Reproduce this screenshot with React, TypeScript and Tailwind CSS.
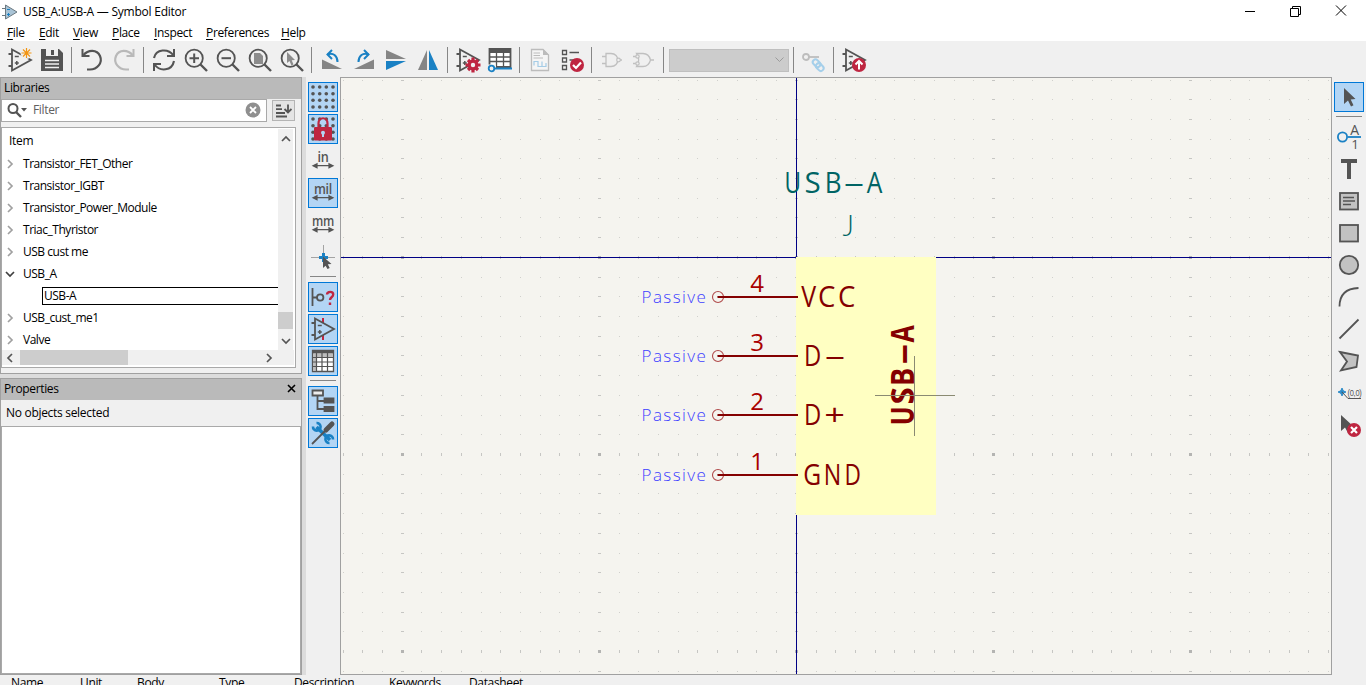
import React from "react";

type Kids = { children?: React.ReactNode };
const G = "#545454";
const B = "#1a81c4";
const R = "#bf2641";

function Icon({ children, dim }: Kids & { dim?: boolean }) {
  return (
    <svg width="24" height="24" viewBox="0 0 24 24" fill="none" stroke={G} strokeWidth="1.8" className={dim ? "shrink-0 overflow-visible opacity-35" : "shrink-0 overflow-visible"}>
      {children}
    </svg>
  );
}

const Slot = ({ children }: Kids) => <div className="flex h-8 w-8 shrink-0 items-center justify-center">{children}</div>;
const VSep = () => (
  <div className="flex h-[26px] w-2 shrink-0 pl-[3px]">
    <div className="w-px bg-[#868686]" />
  </div>
);
const HSep = () => (
  <div className="h-2 w-[26px] shrink-0 pt-[3px]">
    <div className="h-px bg-[#868686]" />
  </div>
);

function Tool({ children, on }: Kids & { on?: boolean }) {
  return (
    <div className="flex h-8 shrink-0 items-center justify-center">
      <div className={on ? "flex h-[30px] w-[30px] items-center justify-center border border-[#0078d7] bg-[#b3d5f4]" : "flex h-[30px] w-[30px] items-center justify-center"}>
        {children}
      </div>
    </div>
  );
}

const OpAmp = () => (
  <g>
    <path d="M4 1.5V22.5L23 12Z" />
    <path d="M0.5 6H4M0.5 18H4" />
    <path d="M6.8 8.5h4M6.8 15h4M8.8 13v4" strokeWidth="1.5" />
  </g>
);

const Lens = ({ children }: Kids) => (
  <Icon>
    {children}
    <circle cx="10.2" cy="10.2" r="8.6" />
    <path d="M16.5 16.5L23 23" strokeWidth="2.4" />
  </Icon>
);

const Arrows = () => <path d="M3 16.7H21M6 14.7L2 16.7L6 18.7ZM18 14.7L22 16.7L18 18.7Z" fill={G} strokeWidth="1.2" />;

const Unit = ({ label }: { label: string }) => (
  <Icon>
    <text x="12" y="12.5" textAnchor="middle" fontSize="15" fontFamily="'Open Sans', sans-serif" fontWeight="600" fill={G} stroke="none" textLength={label === "in" ? 11 : label === "mil" ? 18 : 22} lengthAdjust="spacingAndGlyphs">
      {label}
    </text>
    <Arrows />
  </Icon>
);

const Dots = () => (
  <g fill={G} stroke="none">
    {[2, 8.7, 15.3, 22].map((y) => [2, 8.7, 15.3, 22].map((x) => <circle key={x + "," + y} cx={x} cy={y} r="1.8" />))}
  </g>
);

const Pointer = ({ fill = G }: { fill?: string }) => <path d="M7 3V19L11 15.5L14 21.5L16.5 20.3L13.7 14.5L18.5 14Z" fill={fill} stroke="none" />;

function TopTools() {
  return (
    <div className="flex h-[36px] shrink-0 items-center bg-[#f0f0f0] pl-1 pt-[2px]">
      <Slot>
        <Icon>
          <OpAmp />
          <circle cx="18.5" cy="5" r="6" fill="#f0f0f0" stroke="none" />
          <path d="M18.5 0v10M13.5 5h10M15 1.5l7 7M22 1.5l-7 7" stroke="#f29513" strokeWidth="1.2" />
        </Icon>
      </Slot>
      <Slot>
        <Icon>
          <path d="M1 1H19L23 5V23H1Z" fill={G} stroke="none" />
          <path d="M6 1H18V8H6Z" fill="#f0f0f0" stroke="none" />
          <path d="M11 2H14V7H11Z" fill={G} stroke="none" />
          <path d="M5 12.5H19M5 16H19M5 19.5H19" stroke="#f0f0f0" strokeWidth="1.6" />
        </Icon>
      </Slot>
      <VSep />
      <Slot>
        <Icon>
          <path d="M3.5 7C8 1.5 17 1 20 8C23 15 17 21.5 10 21.5H7" strokeWidth="2.2" />
          <path d="M2.5 1V8H9.5" strokeWidth="2" />
        </Icon>
      </Slot>
      <Slot>
        <Icon dim>
          <path d="M20.5 7C16 1.5 7 1 4 8C1 15 7 21.5 14 21.5H17" strokeWidth="2.2" />
          <path d="M21.5 1V8H14.5" strokeWidth="2" />
        </Icon>
      </Slot>
      <VSep />
      <Slot>
        <Icon>
          <path d="M2 10C4 1 16 0 21.5 7.5M22 13C20 23 8 24 2.5 16.5" strokeWidth="2.1" />
          <path d="M22 1V8H15M2 23V16H9" strokeWidth="2" />
        </Icon>
      </Slot>
      <Slot>
        <Lens>
          <path d="M5.5 10.2H15M10.2 5.5V15" strokeWidth="2" />
        </Lens>
      </Slot>
      <Slot>
        <Lens>
          <path d="M5.5 10.2H15" strokeWidth="2" />
        </Lens>
      </Slot>
      <Slot>
        <Lens>
          <path d="M6 5H12L15 8V16H6Z" fill="#8c8c8c" stroke="none" />
        </Lens>
      </Slot>
      <Slot>
        <Lens>
          <path d="M7 4V15L9.5 13L11.5 17.5L13.5 16.5L11.7 12.3L15 12Z" fill="#8c8c8c" stroke="none" />
        </Lens>
      </Slot>
      <VSep />
      <Slot>
        <Icon>
          <path d="M2 11.5V21H22Z" fill="#858585" stroke="none" />
          <path d="M7.5 6.5C13 4 17.5 8 17.5 14" stroke={B} strokeWidth="2" />
          <path d="M12 2L7.5 6.5L12 11" stroke={B} strokeWidth="2" />
        </Icon>
      </Slot>
      <Slot>
        <Icon>
          <path d="M22 11.5V21H2Z" fill="#858585" stroke="none" />
          <path d="M16.5 6.5C11 4 6.5 8 6.5 14" stroke={B} strokeWidth="2" />
          <path d="M12 2L16.5 6.5L12 11" stroke={B} strokeWidth="2" />
        </Icon>
      </Slot>
      <Slot>
        <Icon>
          <path d="M2 2V11H22Z" fill="#858585" stroke="none" />
          <path d="M2 22V13H22Z" fill={B} stroke="none" />
        </Icon>
      </Slot>
      <Slot>
        <Icon>
          <path d="M2 22H11V2Z" fill="#858585" stroke="none" />
          <path d="M22 22H13V2Z" fill={B} stroke="none" />
        </Icon>
      </Slot>
      <VSep />
      <Slot>
        <Icon>
          <OpAmp />
          <path d="M17 9.5V24.5M9.5 17H24.5M12 12L22 22M22 12L12 22" stroke={R} strokeWidth="3.2" />
          <circle cx="17" cy="17" r="3.8" fill="#f0f0f0" stroke={R} strokeWidth="3.2" />
        </Icon>
      </Slot>
      <Slot>
        <Icon>
          <path d="M1.5 1H22.5V19H1.5Z" fill="white" />
          <path d="M1 1H23V5H1Z" fill={G} stroke="none" />
          <path d="M1 9H23M1 13.5H23M8.5 4V19M15.5 4V19" strokeWidth="1.3" />
          <path d="M0 16.5H8V23H0Z" fill="#f0f0f0" stroke="none" />
          <path d="M7 20.5H24" stroke={B} strokeWidth="2" />
          <circle cx="3.5" cy="20.5" r="2.8" stroke={B} fill="#f0f0f0" />
        </Icon>
      </Slot>
      <VSep />
      <Slot>
        <Icon>
          <path d="M3.5 1.5H15L20.5 7V22.5H3.5Z" stroke="#bcbcbc" strokeWidth="1.3" fill="#f5f5f5" />
          <path d="M15 1V7H21Z" fill="#bcbcbc" stroke="none" />
          <path d="M5.5 5H12M5.5 7.5H12M5.5 10H15" stroke="#bcbcbc" strokeWidth="1" />
          <path d="M6 17.500V13.500H10V18.500H14V13.500M14 18.500H18V15" stroke="#a5cce6" strokeWidth="1.2" />
        </Icon>
      </Slot>
      <Slot>
        <Icon>
          <path d="M2.5 2.5h4v4h-4zM2.5 10h4v4h-4zM2.5 17.5h4v4h-4z" strokeWidth="1.3" />
          <path d="M9.5 4.5H19M9.5 12H14" strokeWidth="1.4" />
          <circle cx="17" cy="17" r="7" fill={R} stroke="none" />
          <path d="M13 17L16 20L21 14.5" stroke="white" strokeWidth="2.2" />
        </Icon>
      </Slot>
      <VSep />
      <Slot>
        <Icon>
          <path d="M6 5.5H11C20 5.5 20 18.5 11 18.5H6ZM2 8.5H6M2 15.5H6M20 12H22" stroke="#c0c0c0" strokeWidth="1.3" />
          <circle cx="18.5" cy="12" r="1.8" stroke="#c0c0c0" strokeWidth="1.2" fill="#f0f0f0" />
        </Icon>
      </Slot>
      <Slot>
        <Icon>
          <path d="M4.500 5.500H11C16 5.500 18 10 18.500 12C18 14 16 18.500 11 18.500H4.500C7.500 14 7.500 10 4.500 5.500ZM1 8.500H4M1 15.500H4M18.500 12H22" stroke="#c0c0c0" strokeWidth="1.3" />
          <circle cx="5.500" cy="8.500" r="1.700" stroke="#c0c0c0" strokeWidth="1.2" fill="#f0f0f0" />
          <circle cx="5.500" cy="15.500" r="1.700" stroke="#c0c0c0" strokeWidth="1.2" fill="#f0f0f0" />
        </Icon>
      </Slot>
      <VSep />
      <div className="mx-px flex h-[23px] w-[120px] shrink-0 items-center justify-end border border-[#bfbfbf] bg-[#cccccc] pr-1">
        <svg width="9" height="6" viewBox="0 0 9 6" fill="none" stroke="#9b9b9b">
          <path d="M0.500 0.500L4.500 4.500L8.500 0.500" />
        </svg>
      </div>
      <VSep />
      <Slot>
        <Icon>
          <circle cx="4" cy="9" r="3" stroke="#bdbdbd" />
          <path d="M7 9H17" stroke="#bdbdbd" />
          <g stroke="#a5cfea" strokeWidth="2" transform="rotate(45 16 17)">
            <rect x="9.500" y="14" width="8.500" height="5.500" rx="2.700" />
            <rect x="14.500" y="14.500" width="8.500" height="5.500" rx="2.700" />
          </g>
        </Icon>
      </Slot>
      <VSep />
      <Slot>
        <Icon>
          <OpAmp />
          <circle cx="17" cy="17" r="7" fill={R} stroke="none" />
          <path d="M17 21.500V14M13.500 16.500L17 13L20.500 16.500" stroke="white" strokeWidth="2" />
        </Icon>
      </Slot>
    </div>
  );
}

function LeftTools() {
  return (
    <div className="flex w-[34px] shrink-0 flex-col items-center bg-[#f0f0f0] pt-1">
      <Tool on><Icon><Dots /></Icon></Tool>
      <Tool on>
        <Icon>
          <Dots />
          <path d="M7.500 11V6.500C7.500 -0.500 16.500 -0.500 16.500 6.500V11" stroke={R} strokeWidth="2.200" />
          <rect x="3" y="10" width="18" height="13.500" rx="1" fill={R} stroke="none" />
          <path d="M12 14.500V20" stroke="#b3d5f4" strokeWidth="2" />
          <circle cx="12" cy="15.800" r="2" fill="#b3d5f4" stroke="none" />
        </Icon>
      </Tool>
      <Tool><Unit label="in" /></Tool>
      <Tool on><Unit label="mil" /></Tool>
      <Tool><Unit label="mm" /></Tool>
      <Tool>
        <Icon>
          <path d="M0 12.500H24M12.500 0V14" stroke="#a3a3a3" strokeWidth="1" />
          <path d="M8 12.500H17M12.500 8V17" stroke={B} strokeWidth="3" />
          <path d="M12 11.500V23L14.600 20.700L16.500 24L18.700 23L16.800 19.300L20.500 19Z" fill={G} stroke="none" />
        </Icon>
      </Tool>
      <HSep />
      <Tool on>
        <Icon>
          <path d="M1.500 3V21M1.500 12.500H6" />
          <circle cx="9.200" cy="12.500" r="3.200" />
          <path d="M16 9.500C16.300 6 22.500 6 22.200 9.500C22 12.500 19 12 19 15M19 17.500V20" stroke={R} strokeWidth="2.400" />
        </Icon>
      </Tool>
      <Tool on>
        <Icon>
          <path d="M12 1V6M12 18V23" stroke={R} strokeWidth="2" />
          <OpAmp />
        </Icon>
      </Tool>
      <Tool on>
        <Icon>
          <path d="M1.500 1.500H22.500V22.500H1.500Z" fill="white" strokeWidth="1.300" />
          <path d="M2 5H22V8H2ZM2 5H6V22H2Z" fill="#bdbdbd" stroke="none" />
          <path d="M1 1H23V4.500H1Z" fill={G} stroke="none" />
          <path d="M2 8.500H22M2 13H22M2 17.500H22M5.500 4V22M11 4V22M16.500 4V22" strokeWidth="1.200" />
        </Icon>
      </Tool>
      <HSep />
      <Tool on>
        <Icon>
          <path d="M1.500 1.500H12V6.500H1.500Z" fill="#ededed" />
          <path d="M6.500 7V20H14M6.500 12H14" />
          <path d="M14 9.500H22.500V13.500H13.500V9.500ZM14 18H22.500V22H13.500V18Z" fill={G} />
        </Icon>
      </Tool>
      <Tool on>
        <Icon>
          <path d="M5.500 6L19 19" stroke={B} strokeWidth="3.600" />
          <path d="M5.500 2A3.800 3.800 0 1 1 2 5.500M18.500 22A3.800 3.800 0 1 1 22 18.500" stroke={B} strokeWidth="2.600" />
          <path d="M1 23L14 10" strokeWidth="1.800" />
          <path d="M15 9L21 3" strokeWidth="5" strokeLinecap="round" />
        </Icon>
      </Tool>
    </div>
  );
}

function RightTools() {
  return (
    <div className="flex w-[34px] shrink-0 flex-col items-center bg-[#f0f0f0] pt-1">
      <Tool on><Icon><Pointer /></Icon></Tool>
      <HSep />
      <Tool>
        <Icon>
          <text x="17.500" y="9.500" textAnchor="middle" fontSize="14" fontFamily="'Open Sans', sans-serif" fill={G} stroke="none">A</text>
          <text x="18" y="24" textAnchor="middle" fontSize="13.500" fontFamily="'Open Sans', sans-serif" fill={G} stroke="none">1</text>
          <path d="M11 12H24" stroke={B} />
          <circle cx="5.500" cy="12" r="4.600" stroke={B} />
        </Icon>
      </Tool>
      <Tool><Icon><path d="M4 4H20M12 4V22" strokeWidth="4" /></Icon></Tool>
      <Tool>
        <Icon>
          <rect x="3" y="4" width="18" height="16.500" fill="#c2c2c2" />
          <path d="M6 8.500H17M6 12H18M6 15.500H14" strokeWidth="1.300" />
        </Icon>
      </Tool>
      <Tool><Icon><rect x="3" y="4" width="18" height="16.500" fill="#c2c2c2" /></Icon></Tool>
      <Tool><Icon><circle cx="12" cy="12" r="9.200" fill="#c2c2c2" /></Icon></Tool>
      <Tool><Icon><path d="M2.500 21.500C2.500 10 9 3.500 21.500 3" /></Icon></Tool>
      <Tool><Icon><path d="M2.500 21.500L21.500 2.500" /></Icon></Tool>
      <Tool><Icon><path d="M3 3L21 6.500L19.500 18L4 21.500L10 12.500Z" fill="#c2c2c2" /></Icon></Tool>
      <Tool>
        <Icon>
          <path d="M1 11H9M5 7V15" stroke={B} strokeWidth="1.500" />
          <circle cx="5" cy="11" r="2.200" stroke={B} strokeWidth="1" />
          <path d="M5 11L11 17.500H24" stroke={G} strokeWidth="1" />
          <text x="10.500" y="14.500" fontSize="9.500" fontFamily="'Liberation Sans', sans-serif" fill={G} stroke="none" textLength="14" lengthAdjust="spacingAndGlyphs">(0,0)</text>
        </Icon>
      </Tool>
      <Tool>
        <Icon>
          <path d="M4 2V18L8 14.500L11 20L13.500 19L11 13.500L16 13Z" fill={G} stroke="none" />
          <circle cx="17" cy="17" r="7" fill={R} stroke="none" />
          <path d="M14 14L20 20M20 14L14 20" stroke="white" strokeWidth="2.200" />
        </Icon>
      </Tool>
    </div>
  );
}

const rows = ["Transistor_FET_Other", "Transistor_IGBT", "Transistor_Power_Module", "Triac_Thyristor", "USB cust me", "USB_A", "", "USB_cust_me1", "Valve"];

const Chevron = ({ d, color = "#555555" }: { d: string; color?: string }) => (
  <svg width="10" height="10" viewBox="0 0 10 10" fill="none" stroke={color} strokeWidth="1.700" className="shrink-0">
    <path d={d} />
  </svg>
);
const RIGHT = "M3 1L7 5L3 9";
const LEFT = "M7 1L3 5L7 9";
const UP = "M1 7L5 3L9 7";
const DOWN = "M1 3L5 7L9 3";

function Libraries() {
  return (
    <section className="flex h-[297px] shrink-0 flex-col border border-[#a0a0a0] bg-[#f0f0f0]">
      <div className="flex h-[21px] shrink-0 items-center bg-[#bababa] pb-[2px] pl-[3px]">Libraries</div>
      <div className="flex h-[23px] shrink-0">
        <div className="flex w-[266px] items-center border border-[#a9a9a9] bg-white pl-[5px] pb-px text-[#606060]">
          <svg width="21" height="16" viewBox="0 0 21 16" fill="none" stroke={G} strokeWidth="2">
            <circle cx="6" cy="6.500" r="4.500" />
            <path d="M9 10L14 15" strokeWidth="2.400" />
            <path d="M14 6H20L17 9.500Z" fill={G} stroke="none" />
          </svg>
          <span className="ml-[5px] grow">Filter</span>
          <svg width="16" height="16" viewBox="0 0 16 16" className="mr-[5px]">
            <circle cx="8" cy="8" r="7.500" fill="#8f8f8f" />
            <path d="M5 5L11 11M11 5L5 11" stroke="white" strokeWidth="1.800" />
          </svg>
        </div>
        <div className="ml-[5px] mt-px flex h-[21px] w-[23px] items-center justify-center border border-[#b4b4b4] bg-[#e4e4e4]">
          <svg width="16" height="14" viewBox="0 0 16 14" fill="none" stroke={G} strokeWidth="1.800">
            <path d="M0 1.500H5M0 5.200H6M0 9H9M0 12.500H11M12 0.500V8M8.500 5L12 8.500L15.500 5" />
          </svg>
        </div>
      </div>
      <div className="mt-[5px] flex h-[241px] w-[295px] shrink-0 flex-col border border-[#a9a9a9] bg-white p-px pl-0">
        <div className="flex h-[221px] tracking-[-0.48px]">
          <div className="flex w-[276px] flex-col">
            <div className="flex h-[24px] shrink-0 items-center pl-[7px] tracking-[-0.3px]">Item</div>
            {rows.map((r) =>
              r === "" ? (
                <div key="sel" className="h-[22px] shrink-0 pl-[40px] pt-[2px]">
                  <div className="flex h-[18px] items-center border border-r-0 border-black pl-[1px]">USB-A</div>
                </div>
              ) : (
                <div key={r} className={r === "Valve" ? "flex h-[21px] shrink-0 items-center pl-[3px] pt-px" : "flex h-[22px] shrink-0 items-center pl-[3px]"}>
                  {r === "USB_A" ? <Chevron d={DOWN} color="#404040" /> : <Chevron d={RIGHT} color="#a0a0a0" />}
                  <span className="ml-[8px]">{r}</span>
                </div>
              )
            )}
          </div>
          <div className="flex w-[15px] flex-col items-center bg-[#f0f0f0] pt-[5px]">
            <Chevron d={UP} />
            <div className="mt-[168px] h-[17px] w-[15px] shrink-0 bg-[#cdcdcd]" />
            <div className="mt-[7px] flex"><Chevron d={DOWN} /></div>
          </div>
        </div>
        <div className="flex h-[15px] items-center bg-[#f0f0f0] pl-[3px]">
          <Chevron d={LEFT} />
          <div className="ml-[5px] h-[15px] w-[108px] bg-[#cdcdcd]" />
          <div className="ml-[136px] flex"><Chevron d={RIGHT} /></div>
        </div>
      </div>
    </section>
  );
}

function Properties() {
  return (
    <section className="flex min-h-0 grow flex-col border border-[#a0a0a0] bg-[#f0f0f0]">
      <div className="flex h-[21px] shrink-0 items-center justify-between bg-[#bababa] pb-[2px] pl-[3px] pr-[5px]">
        Properties
        <svg width="9" height="9" viewBox="0 0 9 9" stroke="black" strokeWidth="1.600"><path d="M1 1L8 8M8 1L1 8" /></svg>
      </div>
      <div className="flex h-[26px] shrink-0 items-center pl-[5px] tracking-[-0.3px]">No objects selected</div>
      <div className="grow border border-[#a9a9a9] bg-white" />
    </section>
  );
}

type GlyphSpec = [string, number, number];

function Glyphs({ chars, y, size, color, weight = 400, family = "'Open Sans', 'Noto Sans', sans-serif" }: { chars: GlyphSpec[]; y: number; size: number; color: string; weight?: number; family?: string }) {
  return (
    <g fill={color} fontFamily={family} fontSize={size} fontWeight={weight} textAnchor="middle">
      {chars.map(([c, x, s], i) => (
        <text key={i} transform={`translate(${x} ${y}) scale(${s} 1)`}>{c}</text>
      ))}
    </g>
  );
}

const PITCH = 19.71;
const columns = Array.from({ length: 51 }, (_, i) => i - 23);
const lines = Array.from({ length: 31 }, (_, i) => i - 9);
const pins = [
  { n: "4", y: 297 },
  { n: "3", y: 356 },
  { n: "2", y: 415 },
  { n: "1", y: 475 },
];

function Canvas() {
  return (
    <svg width="990" height="596" viewBox="341 78 990 596" className="block">
      <rect x="341" y="78" width="990" height="596" fill="#f5f4ef" />
      <g shapeRendering="crispEdges">
        {lines.map((j) =>
          columns.map((i) => {
            const mx = i % 10 === 0;
            const my = j % 10 === 0;
            const w = mx ? 3 : 1;
            const h = my ? 3 : 1;
            const x = Math.floor(796.4 + i * PITCH) - (mx ? 1 : 0);
            const y = Math.floor(257.4 + j * PITCH) - (my ? 1 : 0);
            return <rect key={i + "," + j} x={x} y={y} width={w} height={h} fill={mx && my ? "#b4b4b2" : mx || my ? "#c6c6c3" : "#d0d0cc"} />;
          })
        )}
        <path d="M341 257.500H1331M796.500 78V674" stroke="#000084" strokeWidth="1" />
        <rect x="796" y="257" width="140" height="258" fill="#ffffc2" />
      </g>
      <Glyphs y={193} size={29} color="#006464" chars={[["U", 792.5, 0.78], ["S", 812.5, 1.02], ["B", 833, 0.9], ["-", 853.5, 2.4], ["A", 874.5, 0.85]]} />
      <Glyphs y={236} size={29} color="#006464" weight={300} family="Lato, sans-serif" chars={[["J", 848, 0.95]]} />
      <Glyphs y={307} size={29} color="#840000" chars={[["V", 808.500, 0.86], ["C", 826.5, 0.95], ["C", 846.5, 0.95]]} />
      <Glyphs y={366} size={29} color="#840000" chars={[["D", 812.500, 0.82], ["-", 834.500, 2.4]]} />
      <Glyphs y={425} size={29} color="#840000" chars={[["D", 812.500, 0.82], ["+", 834.500, 1.25]]} />
      <Glyphs y={485} size={29} color="#840000" chars={[["G", 812, 0.85], ["N", 832.300, 0.8], ["D", 852.5, 0.78]]} />
      {pins.map((p) => (
        <g key={p.n}>
          <text x="641.500" y={p.y + 6} fontSize="17" fill="#4040ff" fontFamily="'Open Sans', sans-serif" fontWeight="300" textLength="64">Passive</text>
          <circle cx="718" cy={p.y} r="5.500" fill="none" stroke="#b04a4a" strokeWidth="1.100" />
          <path d={`M717.500 ${p.y}H798`} stroke="#840000" strokeWidth="2" />
          <text x="757" y={p.y - 5} fontSize="24" fill="#a90000" fontFamily="'Open Sans', sans-serif" fontWeight="500" textAnchor="middle">{p.n}</text>
        </g>
      ))}
      <g transform="translate(914 425) rotate(-90)">
        <Glyphs y={0} size={33} color="#840000" weight={700} chars={[["U", 9, 0.76], ["S", 29, 0.95], ["B", 48, 0.82], ["-", 70.500, 2], ["A", 91, 0.76]]} />
      </g>
      <path d="M875 395.500H955M914.500 356V436" stroke="#8a8a72" strokeWidth="1" />
    </svg>
  );
}

const menus = [
  ["File", "w-8"],
  ["Edit", "w-[34px]"],
  ["View", "w-[39px]"],
  ["Place", "w-[42px]"],
  ["Inspect", "w-[52px]"],
  ["Preferences", "w-[75px]"],
  ["Help", "w-10"],
];

const heads = [
  ["Name", "w-[69px]"],
  ["Unit", "w-[57px]"],
  ["Body", "w-[82px]"],
  ["Type", "w-[75px]"],
  ["Description", "w-[95px]"],
  ["Keywords", "w-[80px]"],
  ["Datasheet", "w-[80px]"],
];

export default function App() {
  return (
    <div className="flex h-[685px] w-[1366px] flex-col overflow-hidden bg-[#f0f0f0] font-['Open_Sans','Noto_Sans',sans-serif] text-[12px] leading-4 tracking-[-0.35px] whitespace-nowrap text-black">
      <header className="flex h-[23px] shrink-0 items-center bg-white pl-[2px]">
        <svg width="16" height="16" viewBox="0 0 16 16" fill="none" stroke="#6b7880">
          <path d="M3.500 1V15L15 8Z" fill="#a9c3d5" />
          <path d="M0 4.500H3M0 11.500H3" />
          <path d="M5 5.500H8M5 10.500H8M6.500 9V12" stroke={B} />
        </svg>
        <span className="ml-[5px] grow tracking-[-0.24px]">USB_A:USB-A — Symbol Editor</span>
        <svg width="104" height="12" viewBox="0 0 104 12" fill="none" stroke="black" className="mr-[18px] mb-[2px]">
          <path d="M1 6.500H11M46.500 3.500H54.500V11.500H46.500ZM48.500 3.500V1.500H56.500V9.500H54.500M92 0.500L102 10.500M102 0.500L92 10.500" />
        </svg>
      </header>
      <nav className="flex h-[18px] shrink-0 items-center bg-white pt-[2px] pl-[7px]">
        {menus.map(([m, w]) => (
          <span key={m} className={w}>
            <span className="underline underline-offset-2">{m[0]}</span>
            {m.slice(1)}
          </span>
        ))}
      </nav>
      <TopTools />
      <div className="flex h-[598px] shrink-0">
        <aside className="flex w-[302px] flex-col gap-1 bg-[#dcdcdc]">
          <Libraries />
          <Properties />
        </aside>
        <div className="w-1 shrink-0 bg-[#dcdcdc]" />
        <LeftTools />
        <main className="h-[598px] w-[992px] shrink-0 border border-[#a0a0a0]">
          <Canvas />
        </main>
        <RightTools />
      </div>
      <footer className="flex h-[10px] shrink-0 overflow-hidden pl-[11px]">
        {heads.map(([h, w]) => (
          <span key={h} className={w}>{h}</span>
        ))}
      </footer>
    </div>
  );
}
